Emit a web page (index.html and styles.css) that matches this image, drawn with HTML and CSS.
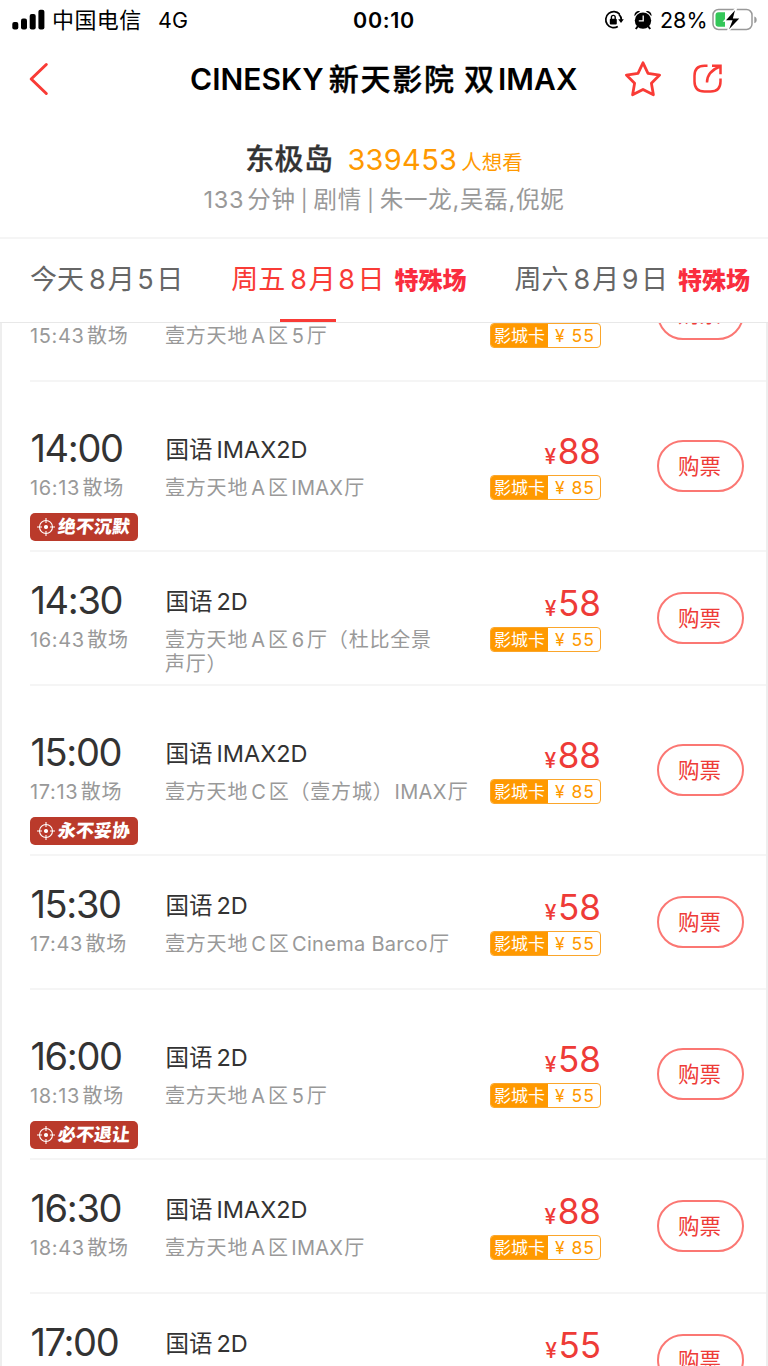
FILE: index.html
```
<!DOCTYPE html>
<html lang="zh-CN">
<head>
<meta charset="utf-8">
<title>CINESKY新天影院</title>
<link rel="stylesheet" href="styles.css">
</head>
<body>
<div class="screen">
  <div class="status">
    <svg class="signal" width="34" height="22" viewBox="0 0 34 22"><rect x="0.3" y="13" width="6" height="7.5" rx="2"/><rect x="9" y="9.4" width="6" height="11.1" rx="2"/><rect x="17.7" y="5" width="6" height="15.5" rx="2"/><rect x="26.4" y="0.8" width="6" height="19.7" rx="2"/></svg>
    <span class="carrier">中国电信</span><span class="net">4G</span>
    <span class="clock">00:10</span>
    <div class="status-right">
      <svg width="20" height="20" viewBox="0 0 20 20"><path d="M15.6 4.2A8 8 0 1 0 13.8 16.6M17.4 10A8 8 0 0 0 15 4.4" fill="none" stroke="#000" stroke-width="1.7"/><path d="M14.2 9.2h5.6L17 13z"/><rect x="5.8" y="8.8" width="7" height="5.6" rx="1"/><path d="M7.4 9V7.3a1.9 1.9 0 0 1 3.8 0V9" fill="none" stroke="#000" stroke-width="1.4"/></svg>
      <svg class="alarm" width="18" height="20" viewBox="0 0 18 20"><circle cx="9" cy="10.6" r="8.2"/><path d="M.6 6.200A12 12 0 0 1 6 1.400C4 0 -.4 2.600 .6 6.200zM17.400 6.200A12 12 0 0 0 12 1.400C14 0 18.400 2.600 17.400 6.200z"/><path d="M4 16l-2.200 3M14 16l2.200 3" stroke="#000" stroke-width="2"/><path d="M9.200 5.500v5.300H4.800" fill="none" stroke="#fff" stroke-width="1.300"/></svg>
      <span class="pct">28%</span>
      <svg width="46" height="24" viewBox="0 0 46 24"><rect x="1" y="1.500" width="39" height="20" rx="5.500" fill="none" stroke="#999" stroke-width="1.500"/><path d="M42.300 8.500c3.200 1 3.200 5.800 0 6.800z" fill="#999"/><path d="M6.500 4.300H13V18.800H6.500A3 3 0 0 1 3.500 16V7.300a3 3 0 0 1 3-3z" fill="#34c759"/><path d="M24.500 -.5L12.300 13h7.200L15 24.500 29 9.800h-7.200z" stroke="#fff" stroke-width="1.500"/></svg>
    </div>
  </div>

  <div class="nav">
    <svg class="back" width="20" height="34" viewBox="0 0 20 34"><path d="M17.300 2.500L2.200 17l15.100 14.500" fill="none" stroke="#f93b36" stroke-width="3" stroke-linecap="round" stroke-linejoin="round"/></svg>
    <h1>CINESKY<span class="cn">新天影院</span><span class="dual">双</span>IMAX</h1>
    <svg class="star" width="38" height="38" viewBox="0 0 38 38"><path d="M19 2.800l5 10.600 11.600 1.700-8.200 8.200 2 11.500L19 29.400 8.600 34.800l2-11.500-8.200-8.200L14 13.400z" fill="none" stroke="#f93b36" stroke-width="2.800" stroke-linejoin="round"/></svg>
    <svg class="share" width="32" height="32" viewBox="0 0 32 32"><path d="M15.500 2.800H12.500Q2.500 2.800 2.500 12.800v5.700q0 10 10 10h6q10 0 10-10V15.500M20 2.800h8.500v8.500M28 3.500Q15 8.500 15 19.500" fill="none" stroke="#f93b36" stroke-width="2.500"/></svg>
  </div>

  <div class="movie">
    <div class="movie-title"><b>东极岛</b><span class="count">339453</span><span class="want">人想看</span></div>
    <div class="movie-info"><span class="mins">133</span>分钟<i>|</i>剧情<i>|</i>朱一龙,吴磊,倪妮</div>
  </div>

  <div class="tabs">
    <div class="tab">今天<span class="m">8</span>月<span class="d">5</span>日</div>
    <div class="tab on">周五<span class="m">8</span>月<span class="d">8</span>日<em>特殊场</em></div>
    <div class="tab">周六<span class="m">8</span>月<span class="d">9</span>日<em>特殊场</em></div>
  </div>

  <div class="list">
    <div class="row cut">
      <div class="when"><div class="time"></div><div class="end"><span>15:43</span>散场</div></div>
      <div class="what"><div class="lang"></div><div class="hall">壹方天地<span class="l">A</span>区<span class="l">5</span>厅</div></div>
      <div class="cost"><div class="price"></div><div class="card"><b>影城卡</b><span>¥ 55</span></div></div>
      <div class="buy">购票</div>
    </div>
    <div class="row tagged">
      <div class="when"><div class="time">14:00</div><div class="end"><span>16:13</span>散场</div>
        <div class="tag"><svg width="18" height="18" viewBox="0 0 18 18"><circle cx="9" cy="9" r="6.500"/><path d="M9 0v5M9 13v5M0 9h5M13 9h5"/><circle class="dot" cx="9" cy="9" r="1.500"/></svg><span>绝不沉默</span></div></div>
      <div class="what"><div class="lang">国语<span>IMAX2D</span></div><div class="hall">壹方天地<span class="l">A</span>区<span class="l w">IMAX</span>厅</div></div>
      <div class="cost"><div class="price"><small>¥</small>88</div><div class="card"><b>影城卡</b><span>¥ 85</span></div></div>
      <div class="buy">购票</div>
    </div>
    <div class="row">
      <div class="when"><div class="time">14:30</div><div class="end"><span>16:43</span>散场</div></div>
      <div class="what"><div class="lang">国语<span>2D</span></div><div class="hall">壹方天地<span class="l">A</span>区<span class="l">6</span>厅（杜比全景<br>声厅）</div></div>
      <div class="cost"><div class="price"><small>¥</small>58</div><div class="card"><b>影城卡</b><span>¥ 55</span></div></div>
      <div class="buy">购票</div>
    </div>
    <div class="row tagged">
      <div class="when"><div class="time">15:00</div><div class="end"><span>17:13</span>散场</div>
        <div class="tag"><svg width="18" height="18" viewBox="0 0 18 18"><circle cx="9" cy="9" r="6.500"/><path d="M9 0v5M9 13v5M0 9h5M13 9h5"/><circle class="dot" cx="9" cy="9" r="1.500"/></svg><span>永不妥协</span></div></div>
      <div class="what"><div class="lang">国语<span>IMAX2D</span></div><div class="hall">壹方天地<span class="l">C</span>区（壹方城）<span class="l p">IMAX</span>厅</div></div>
      <div class="cost"><div class="price"><small>¥</small>88</div><div class="card"><b>影城卡</b><span>¥ 85</span></div></div>
      <div class="buy">购票</div>
    </div>
    <div class="row">
      <div class="when"><div class="time">15:30</div><div class="end"><span>17:43</span>散场</div></div>
      <div class="what"><div class="lang">国语<span>2D</span></div><div class="hall">壹方天地<span class="l">C</span>区<span class="l w">Cinema Barco</span>厅</div></div>
      <div class="cost"><div class="price"><small>¥</small>58</div><div class="card"><b>影城卡</b><span>¥ 55</span></div></div>
      <div class="buy">购票</div>
    </div>
    <div class="row tagged">
      <div class="when"><div class="time">16:00</div><div class="end"><span>18:13</span>散场</div>
        <div class="tag"><svg width="18" height="18" viewBox="0 0 18 18"><circle cx="9" cy="9" r="6.500"/><path d="M9 0v5M9 13v5M0 9h5M13 9h5"/><circle class="dot" cx="9" cy="9" r="1.500"/></svg><span>必不退让</span></div></div>
      <div class="what"><div class="lang">国语<span>2D</span></div><div class="hall">壹方天地<span class="l">A</span>区<span class="l">5</span>厅</div></div>
      <div class="cost"><div class="price"><small>¥</small>58</div><div class="card"><b>影城卡</b><span>¥ 55</span></div></div>
      <div class="buy">购票</div>
    </div>
    <div class="row">
      <div class="when"><div class="time">16:30</div><div class="end"><span>18:43</span>散场</div></div>
      <div class="what"><div class="lang">国语<span>IMAX2D</span></div><div class="hall">壹方天地<span class="l">A</span>区<span class="l w">IMAX</span>厅</div></div>
      <div class="cost"><div class="price"><small>¥</small>88</div><div class="card"><b>影城卡</b><span>¥ 85</span></div></div>
      <div class="buy">购票</div>
    </div>
    <div class="row">
      <div class="when"><div class="time">17:00</div></div>
      <div class="what"><div class="lang">国语<span>2D</span></div></div>
      <div class="cost"><div class="price"><small>¥</small>55</div></div>
      <div class="buy">购票</div>
    </div>
  </div>
</div>
</body>
</html>
```
FILE: styles.css
```
* { box-sizing: border-box; }
body { margin: 0; background: #fff; overflow: hidden; }
svg { display: block; flex: none; overflow: visible; }
.screen {
  width: 768px; height: 1366px; overflow: hidden;
  display: flex; flex-direction: column;
  font-family: Inter, "Noto Sans CJK SC", sans-serif;
  color: #333; white-space: nowrap;
}

.status { height: 40px; flex: none; display: grid; grid-template-columns: 40px 106px 207px 1fr auto; padding: 0 10px 0 12px; align-items: center; color: #000; font-size: 20px; line-height: 40px; }
.signal { margin-top: -1px; }
.carrier { font-size: 22px; letter-spacing: .4px; }
.net { font-size: 21.500px; }
.clock { font-size: 21.500px; font-weight: 600; letter-spacing: .7px; margin-left: -12px; }
.status-right { display: flex; align-items: center; }
.alarm { margin-left: 10px; }
.pct { font-size: 21.500px; margin: 0 5px 0 8px; width: 47px; }

.nav { height: 78px; flex: none; display: flex; align-items: center; padding-left: 29px; color: #000; }
.back { margin-right: 141px; }
h1 { margin: 0; width: 389px; font-size: 30px; font-weight: 600; line-height: 78px; letter-spacing: .05px; }
h1 .cn { margin: 0 8px 0 5px; letter-spacing: 1.800px; }
h1 .cn, h1 .dual { font-weight: 500; -webkit-text-stroke: .4px #000; }
h1 .dual { margin-right: 4px; }
.star { margin-left: 45px; }
.share { margin-left: 30px; }

.movie { height: 121px; flex: none; padding-top: 22px; text-align: center; border-bottom: 2px solid #f5f5f5; }
.movie-title { height: 40px; line-height: 40px; }
.movie-title b { font-size: 29px; font-weight: 500; letter-spacing: .4px; -webkit-text-stroke: .3px #333; }
.count { font-size: 29px; color: #f90; margin: 0 4px 0 14px; letter-spacing: .3px; }
.want { font-size: 20.500px; color: #f90; }
.movie-info { font-size: 23.500px; line-height: 40px; color: #999; letter-spacing: .75px; }
.movie-info i { font-style: normal; margin: 0 5px; font-size: 21px; }
.mins { margin-right: 3px; }

.tabs { height: 84px; flex: none; display: flex; border-bottom: 1px solid #e8e8e8; padding-left: 30px; gap: 48px; line-height: 82px; font-size: 27px; color: #666; position: relative; z-index: 1; background: #fff; }
.tab { position: relative; }
.tab .m { margin: 0 2px 0 5px; }
.tab .d { margin: 0 2.500px; }
.tab.on { color: #f93b36; }
.tab.on::after { content: ""; position: absolute; left: 49px; bottom: 0; width: 56px; height: 3px; background: #f93b36; }
.tab em { font-style: normal; font-size: 24px; font-weight: 900; color: #fa2d3e; margin-left: 10px; }

.list { flex: 1; min-height: 0; overflow: hidden; border: solid #eee; border-width: 0 2px; padding-left: 28px; }
.row { height: 134px; display: grid; grid-template-columns: 136px 324px 111px 1fr; padding-top: 28px; border-bottom: 2px solid #f5f5f5; }
.row.tagged { height: 170px; padding-top: 46px; }
.row.cut { margin-top: -75px; }
.time { height: 42px; line-height: 40px; font-size: 38px; letter-spacing: -1.350px; padding-left: .5px; }
.end, .hall { font-size: 20px; letter-spacing: .65px; line-height: 24px; color: #999; padding-top: 6px; }
.end span { margin-right: 2.500px; }
.hall { margin-left: -1px; letter-spacing: .8px; }
.hall .l { margin: 0 2.500px 0 3px; letter-spacing: .4px; }
.hall .w { margin: 0 1px 0 2.500px; letter-spacing: .3px; }
.hall .p { margin: 0 1px; letter-spacing: .3px; }
.lang { height: 42px; line-height: 44px; font-size: 23.500px; margin-left: -.5px; }
.lang span { margin-left: 4px; }
.price { height: 46px; line-height: 46px; font-size: 35px; color: #ee3b37; text-align: right; }
.price small { font-size: 21px; font-weight: 500; margin-right: 1.500px; }
.card { height: 25px; margin-top: 1px; border: 1.500px solid #fba62b; border-radius: 4px; display: flex; overflow: hidden; line-height: 24px; color: #f90; }
.card b { width: 57px; background: #f90; color: #fff; font-weight: 400; font-size: 17px; text-align: center; flex: none; }
.card span { flex: 1; font-size: 17.500px; text-align: center; letter-spacing: 1px; padding-left: 2px; }
.buy { width: 87px; height: 52px; margin: 12px 0 0 56px; border: 2px solid #fb7773; border-radius: 26px; color: #ee3b37; font-size: 21.500px; line-height: 48px; text-align: center; padding-right: 2px; }
.tag { width: 108px; height: 28px; margin-top: 13px; padding-left: 7px; background: #ba3a2b; border-radius: 5px; display: flex; align-items: center; gap: 3px; color: #fff; }
.tag span { font-size: 18px; font-weight: 900; line-height: 26px; transform: skewX(-7deg); }
.tag svg { fill: none; stroke: #fff; stroke-width: 1.100; }
.tag .dot { fill: #fff; }
```
